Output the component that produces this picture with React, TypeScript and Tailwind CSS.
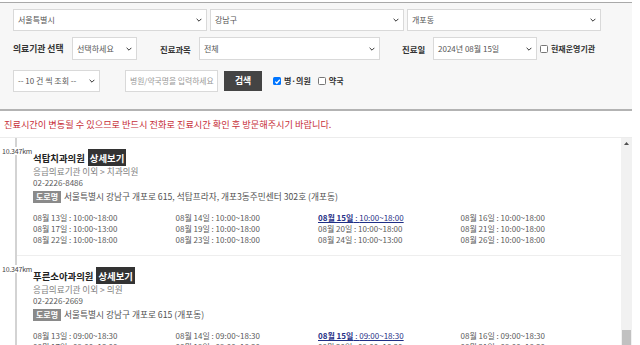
import React from "react";

const Chev = () => (
  <svg width="6" height="4" viewBox="0 0 6 4" className="shrink-0">
    <path d="M0.6 0.8 L3 3.2 L5.4 0.8" stroke="#333" strokeWidth="1" fill="none" />
  </svg>
);

function Sel({ w, text }: { w: string; text: string }) {
  return (
    <div
      className={`flex items-center justify-between bg-white border border-[#d9d9d9] pl-[4px] pr-[4px] h-full text-[8px] text-[#555] ${w}`}
    >
      <span className="whitespace-nowrap leading-[12px]">{text}</span>
      <Chev />
    </div>
  );
}

const Checked = () => (
  <span className="w-[8px] h-[8px] rounded-[1.5px] bg-[#0075ff] flex items-center justify-center shrink-0">
    <svg viewBox="0 0 8 8" className="w-[7px] h-[7px]">
      <path d="M1.4 4.2 L3.2 6 L6.6 2" stroke="white" strokeWidth="1.4" fill="none" />
    </svg>
  </span>
);

const Unchecked = () => (
  <span className="block w-[8px] h-[8px] rounded-[1.5px] border border-[#767676] bg-white shrink-0" />
);

type Sched = { d: string; t: string; hl?: boolean };

function Entry({
  name,
  cat,
  phone,
  addr,
  sched,
}: {
  name: string;
  cat: string;
  phone: string;
  addr: string;
  sched: Sched[];
}) {
  return (
    <div className="relative border-b border-[#eeeeee] pt-[11px] pl-[16px] h-[118px]">
      <span className="absolute left-[-15px] top-[9px] bg-white text-[7px] leading-[8px] text-[#444] tracking-[-0.2px]">
        10.347km
      </span>
      <div className="flex items-center h-[17px] gap-[3px]">
        <span className="font-bold text-[9.4px] text-[#222] leading-[12px] whitespace-nowrap">{name}</span>
        <span className="bg-[#333] text-white font-bold text-[9.4px] px-[2px] h-[17px] flex items-center leading-[12px] whitespace-nowrap">
          상세보기
        </span>
      </div>
      <div className="text-[8.6px] leading-[11px] text-[#808080] whitespace-nowrap">{cat}</div>
      <div className="text-[8px] leading-[12px] text-[#5a5a5a]">{phone}</div>
      <div className="flex items-center h-[12px] mt-[2px] gap-[3px]">
        <span className="bg-[#8a8a8a] text-white font-bold text-[8px] h-[12px] px-[3px] flex items-center leading-[12px] whitespace-nowrap">
          도로명
        </span>
        <span className="text-[8.7px] text-[#505050] leading-[12px] whitespace-nowrap">{addr}</span>
      </div>
      <div className="grid grid-cols-4 w-[570px] mt-[9px]">
        {sched.map((s, i) =>
          s.hl ? (
            <div key={i} className="text-[8px] leading-[11px] text-[#1f2f86] whitespace-nowrap">
              <span className="underline">
                <span className="font-bold">{s.d}</span> : {s.t}
              </span>
            </div>
          ) : (
            <div key={i} className="text-[8px] leading-[11px] text-[#5a5a5a] whitespace-nowrap">
              {s.d} : {s.t}
            </div>
          )
        )}
      </div>
    </div>
  );
}

const mk = (a: string, b: string, c: string): Sched[] => [
  { d: "08월 13일", t: a },
  { d: "08월 14일", t: a },
  { d: "08월 15일", t: a, hl: true },
  { d: "08월 16일", t: a },
  { d: "08월 17일", t: b },
  { d: "08월 19일", t: a },
  { d: "08월 20일", t: a },
  { d: "08월 21일", t: a },
  { d: "08월 22일", t: a },
  { d: "08월 23일", t: a },
  { d: "08월 24일", t: c },
  { d: "08월 26일", t: a },
];

export default function App() {
  return (
    <div className="h-[345px] w-[640px] overflow-hidden bg-white font-['Noto_Sans_CJK_KR',sans-serif]">
      <div className="w-[632px]">
        {/* Search panel */}
        <div className="mt-[2px] h-[109px] border-t border-t-[#a9a9a9] border-b-2 border-b-[#b3b3b3] bg-[#f7f7f7] pt-[6px] pl-[13px]">
          <div className="flex h-[22px] gap-[3px]">
            <Sel w="w-[194px]" text="서울특별시" />
            <Sel w="w-[194px]" text="강남구" />
            <Sel w="w-[194px]" text="개포동" />
          </div>
          <div className="flex items-center h-[23px] mt-[6px]">
            <span className="w-[59px] font-bold text-[8.8px] text-[#333] leading-[12px] whitespace-nowrap">
              의료기관 선택
            </span>
            <Sel w="w-[65px]" text="선택하세요" />
            <span className="ml-[23px] w-[39px] font-bold text-[8.4px] text-[#333] leading-[12px] whitespace-nowrap">
              진료과목
            </span>
            <Sel w="w-[181px]" text="전체" />
            <span className="ml-[22px] w-[31px] font-bold text-[8.4px] text-[#333] leading-[12px] whitespace-nowrap">
              진료일
            </span>
            <Sel w="w-[104px]" text="2024년 08월 15일" />
            <span className="ml-[3px]">
              <Unchecked />
            </span>
            <span className="ml-[3px] font-bold text-[8px] text-[#333] leading-[12px] whitespace-nowrap">
              현재운영기관
            </span>
          </div>
          <div className="flex items-center h-[22px] mt-[10px]">
            <Sel w="w-[87px]" text="-- 10 건 씩 조회 --" />
            <div className="ml-[25px] w-[93px] h-full bg-white border border-[#d9d9d9] pl-[4px] flex items-center overflow-hidden">
              <span className="text-[7.8px] text-[#999] whitespace-nowrap leading-[12px]">병원/약국명을 입력하세요</span>
            </div>
            <div className="ml-[6px] w-[38px] h-[20px] bg-[#444] text-white font-bold text-[8.8px] flex items-center justify-center leading-[12px]">
              검색
            </div>
            <span className="ml-[11px]">
              <Checked />
            </span>
            <span className="ml-[3px] font-bold text-[8px] text-[#333] leading-[12px] whitespace-nowrap">병·의원</span>
            <span className="ml-[7px]">
              <Unchecked />
            </span>
            <span className="ml-[3px] font-bold text-[8px] text-[#333] leading-[12px] whitespace-nowrap">약국</span>
          </div>
        </div>

        {/* Notice */}
        <div className="h-[26px] flex items-center pl-[4px] text-[9.2px] text-[#c7303a] leading-[12px] whitespace-nowrap">
          진료시간이 변동될 수 있으므로 반드시 전화로 진료시간 확인 후 방문해주시기 바랍니다.
        </div>

        {/* List */}
        <div className="flex h-[208px] border-t border-[#ececec]">
          <div className="flex-1 overflow-hidden">
            <div className="ml-[15px] border-l-2 border-[#d3d3d3] h-full">
              <Entry
                name="석탑치과의원"
                cat="응급의료기관 이외 > 치과의원"
                phone="02-2226-8486"
                addr="서울특별시 강남구 개포로 615, 석탑프라자, 개포3동주민센터 302호 (개포동)"
                sched={mk("10:00~18:00", "10:00~13:00", "10:00~13:00")}
              />
              <Entry
                name="푸른소아과의원"
                cat="응급의료기관 이외 > 의원"
                phone="02-2226-2669"
                addr="서울특별시 강남구 개포로 615 (개포동)"
                sched={mk("09:00~18:30", "09:00~13:00", "09:00~13:00")}
              />
            </div>
          </div>
          <div className="w-[11px] bg-[#f1f1f1] flex flex-col justify-between">
            <div className="flex justify-center pt-[4px]">
              <svg width="5" height="3" viewBox="0 0 5 3">
                <path d="M0 3 L2.5 0 L5 3 Z" fill="#505050" />
              </svg>
            </div>
            <div className="mx-[1px] h-[15px] bg-[#c1c1c1]" />
          </div>
        </div>
      </div>
    </div>
  );
}
